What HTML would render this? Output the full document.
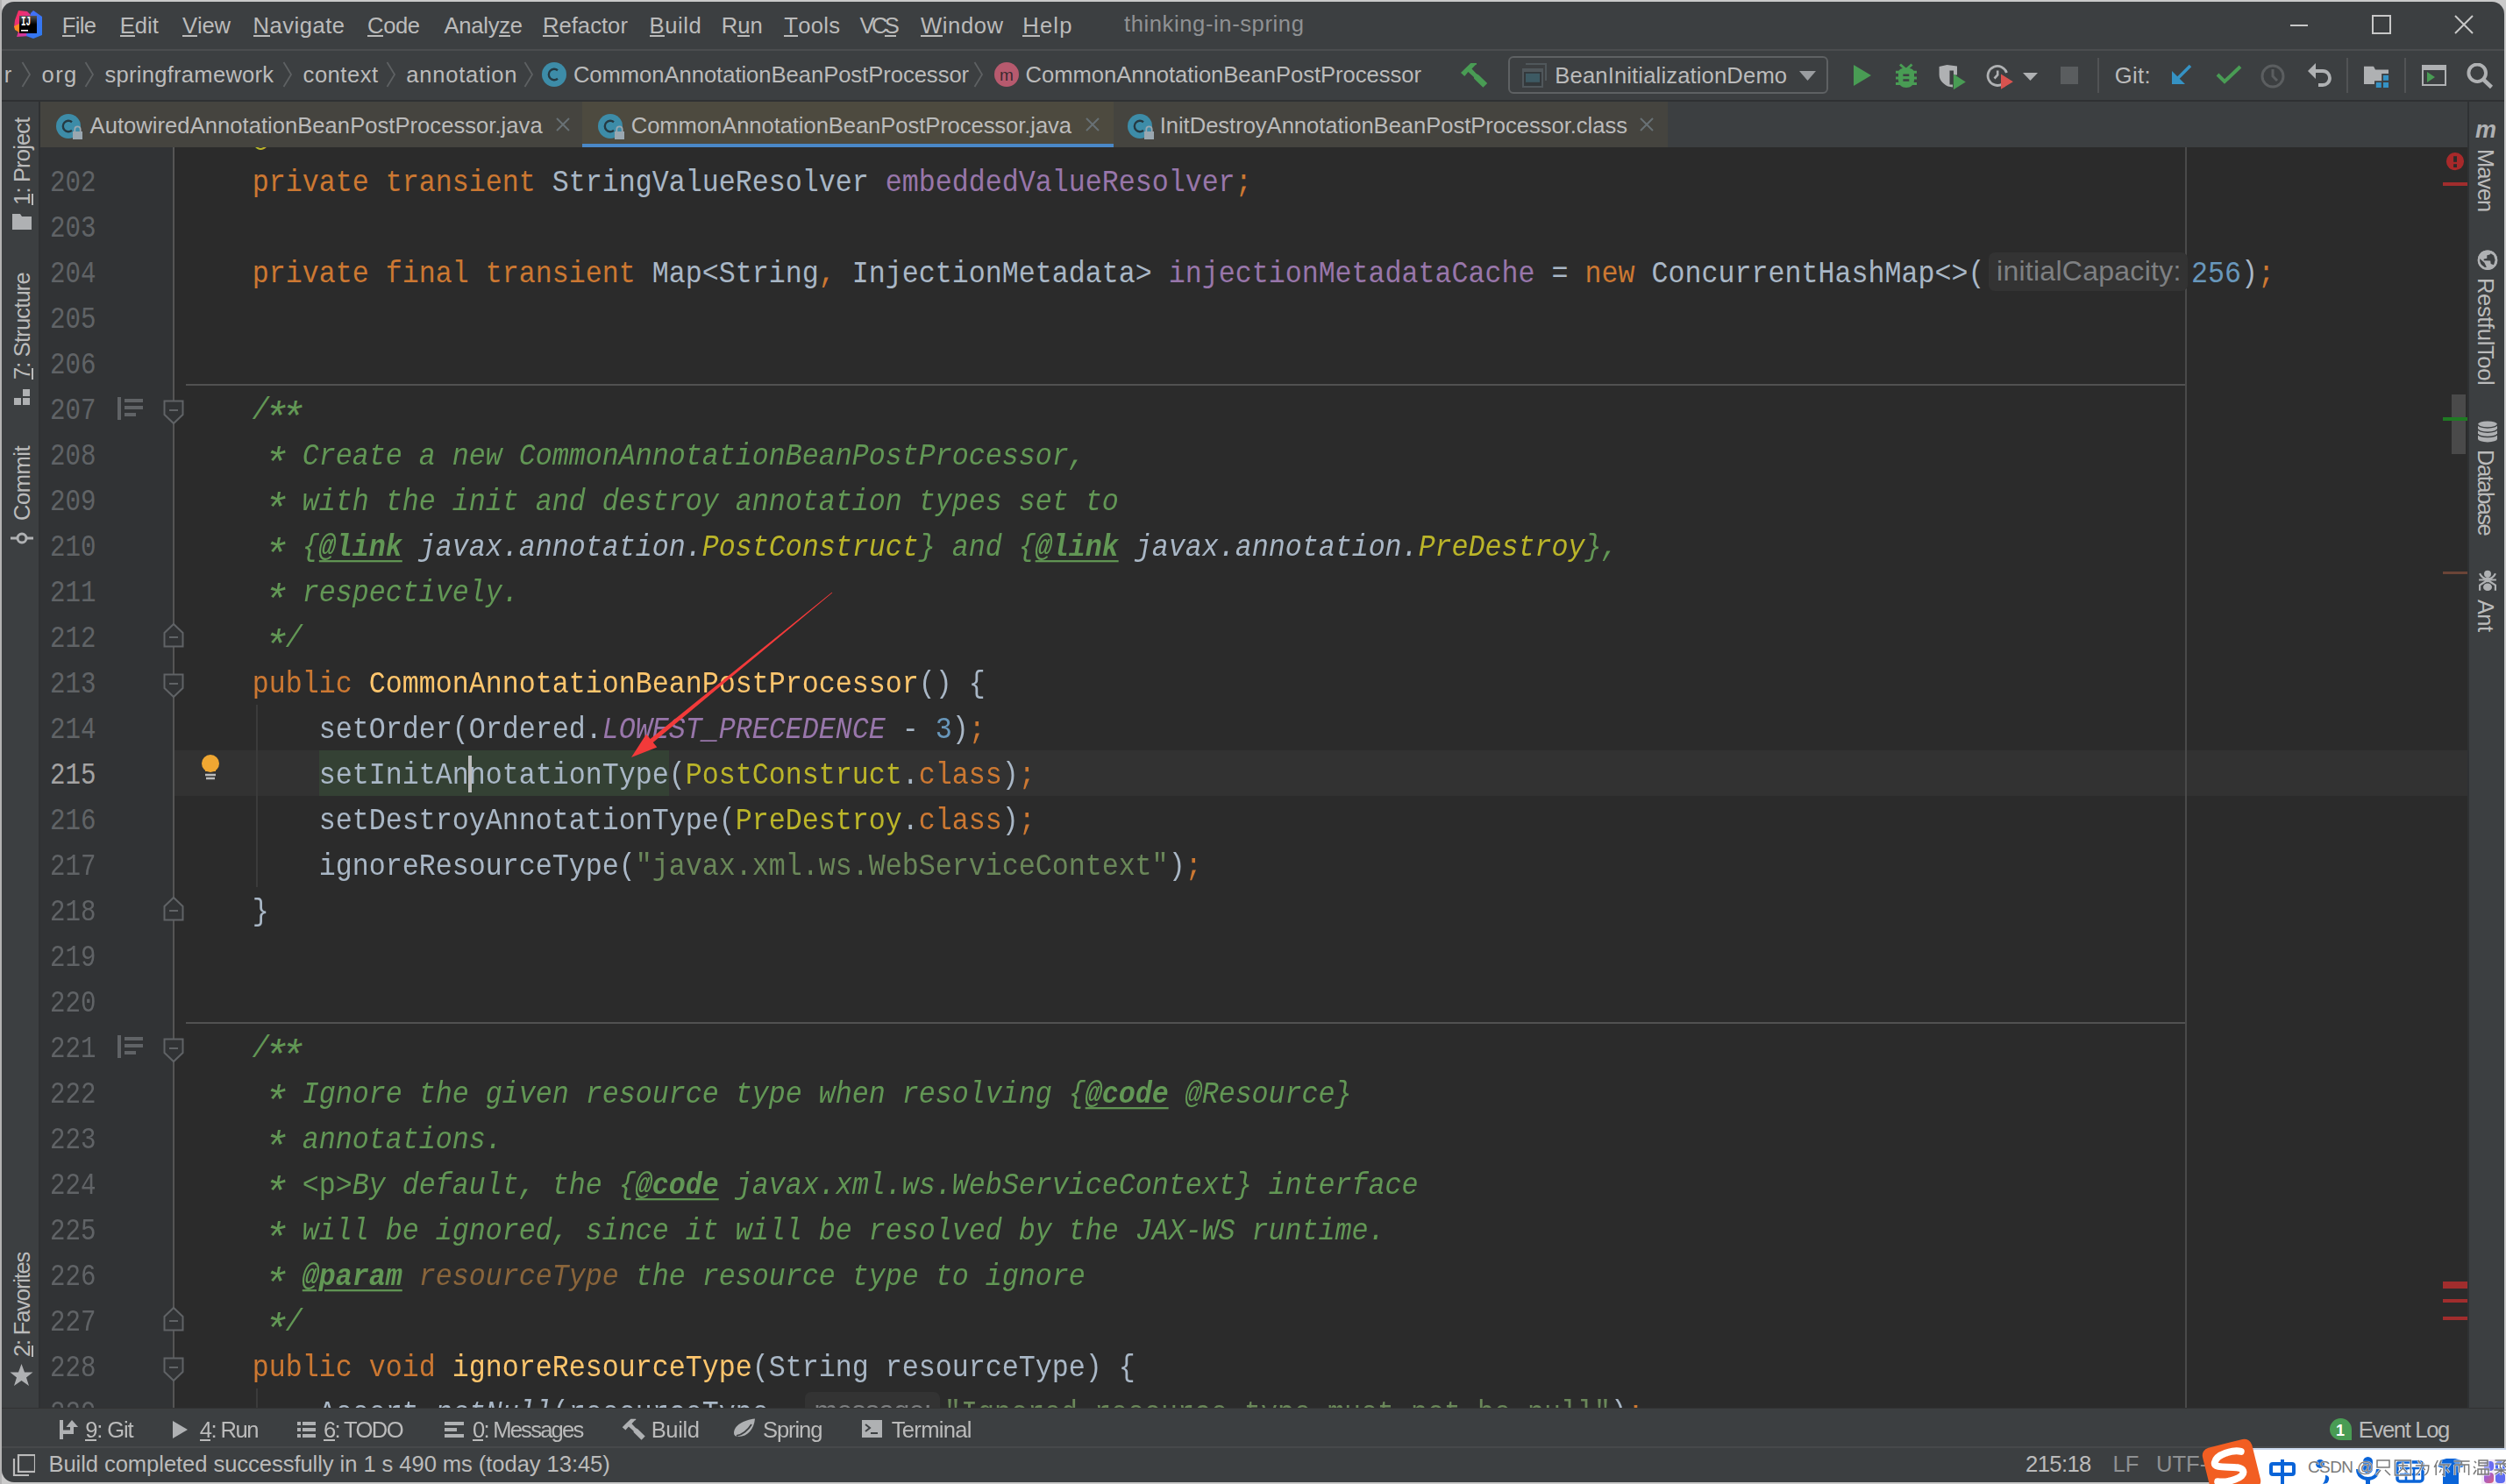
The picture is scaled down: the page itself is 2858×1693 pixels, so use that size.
<!DOCTYPE html><html><head><meta charset="utf-8"><style>
html,body{margin:0;padding:0;width:2858px;height:1693px;overflow:hidden;background:linear-gradient(90deg,#b4b4b4 0px,#b4b4b4 2px,#cacaca 2px);}
.r{position:absolute;}
.t{position:absolute;white-space:pre;line-height:1;font-family:"Liberation Sans", sans-serif;}
.t u{text-decoration:none;border-bottom:2px solid currentColor;display:inline-block;line-height:0.86;}
#win{position:absolute;left:0;top:0;width:2858px;height:1693px;clip-path:inset(2px round 14px);background:#3C3F41;}
.code{position:absolute;white-space:pre;font-family:"Liberation Mono", monospace;font-size:31.66px;line-height:52px;height:52px;color:#A9B7C6;transform-origin:0 38px;transform:scaleY(1.1);}
.kw{color:#CC7832}.md{color:#FFC66D}.fd{color:#9876AA}.num{color:#6897BB}.str{color:#6A8759}
.doc{color:#629755;font-style:italic}.ref{color:#BBB529}.dl{color:#A9B7C6}.tag{font-weight:bold;text-decoration:underline;text-underline-offset:5px;text-decoration-thickness:2px;}
.it{font-style:italic}.ast{display:inline-block;transform:translate(-2.2px,10.3px) scale(1.5,1.36);}.pn{color:#8A653B}
.ln{position:absolute;white-space:pre;font-family:"Liberation Mono", monospace;font-size:31.66px;line-height:52px;color:#606366;text-align:right;width:63.5px;left:0px;transform-origin:63.5px 38px;transform:scale(0.92,1.08);}
</style></head><body><div id="win"><svg class="r" style="left:14px;top:11px;" width="36" height="36" viewBox="0 0 36 36">
<defs><linearGradient id="lg1" x1="0" y1="0" x2="1" y2="1"><stop offset="0" stop-color="#FF2D55"/><stop offset="1" stop-color="#C13CB8"/></linearGradient>
<linearGradient id="lg2" x1="0" y1="0" x2="1" y2="1"><stop offset="0" stop-color="#4A6CF7"/><stop offset="1" stop-color="#2D7BF0"/></linearGradient>
<linearGradient id="lg3" x1="0" y1="0" x2="0" y2="1"><stop offset="0" stop-color="#555"/><stop offset="0.5" stop-color="#000"/></linearGradient></defs>
<polygon points="7,1 17,2 22,7 20,30 5,31 8,22 2,20 3,12" fill="url(#lg1)"/>
<polygon points="2,19 8,16 8,26 3,23" fill="#FF8A1F"/>
<polygon points="24,1 34,8 34,29 24,33 16,30 21,4" fill="url(#lg2)"/>
<rect x="8" y="7" width="20" height="20" fill="url(#lg3)"/>
<text x="9.9" y="17.9" font-family="Liberation Mono" font-weight="bold" font-size="13.8" textLength="11.3" lengthAdjust="spacingAndGlyphs" fill="#fff">IJ</text>
<rect x="10" y="23" width="8" height="1.6" fill="#fff"/>
</svg><div class="t" style="left:70.80px;top:16.62px;font-size:25.6px;color:#BBBBBB;letter-spacing:-0.667px;"><u>F</u>ile</div><div class="t" style="left:136.70px;top:16.62px;font-size:25.6px;color:#BBBBBB;letter-spacing:0.033px;"><u>E</u>dit</div><div class="t" style="left:208.10px;top:16.62px;font-size:25.6px;color:#BBBBBB;letter-spacing:-0.200px;"><u>V</u>iew</div><div class="t" style="left:288.60px;top:16.62px;font-size:25.6px;color:#BBBBBB;letter-spacing:0.486px;"><u>N</u>avigate</div><div class="t" style="left:419.10px;top:16.62px;font-size:25.6px;color:#BBBBBB;letter-spacing:-0.400px;"><u>C</u>ode</div><div class="t" style="left:506.40px;top:16.62px;font-size:25.6px;color:#BBBBBB;letter-spacing:-0.233px;">Analy<u>z</u>e</div><div class="t" style="left:618.90px;top:16.62px;font-size:25.6px;color:#BBBBBB;letter-spacing:0.043px;"><u>R</u>efactor</div><div class="t" style="left:740.50px;top:16.62px;font-size:25.6px;color:#BBBBBB;letter-spacing:0.550px;"><u>B</u>uild</div><div class="t" style="left:822.70px;top:16.62px;font-size:25.6px;color:#BBBBBB;letter-spacing:0.000px;">R<u>u</u>n</div><div class="t" style="left:894.20px;top:16.62px;font-size:25.6px;color:#BBBBBB;letter-spacing:0.325px;"><u>T</u>ools</div><div class="t" style="left:980.50px;top:16.62px;font-size:25.6px;color:#BBBBBB;letter-spacing:-3.650px;">VC<u>S</u></div><div class="t" style="left:1050.00px;top:16.62px;font-size:25.6px;color:#BBBBBB;letter-spacing:0.600px;"><u>W</u>indow</div><div class="t" style="left:1166.20px;top:16.62px;font-size:25.6px;color:#BBBBBB;letter-spacing:1.233px;"><u>H</u>elp</div><div class="t" style="left:1282.00px;top:14.92px;font-size:25.6px;color:#8F9193;letter-spacing:0.588px;">thinking-in-spring</div><div class="r" style="left:2612px;top:28px;width:20px;height:2px;background:#C8C8C8;"></div><svg class="r" style="left:2705px;top:17px;" width="22" height="22" viewBox="0 0 22 22"><rect x="1" y="1" width="20" height="20" fill="none" stroke="#C8C8C8" stroke-width="2"/></svg><svg class="r" style="left:2799px;top:17px;" width="22" height="22" viewBox="0 0 22 22"><path d="M1 1L21 21M21 1L1 21" stroke="#C8C8C8" stroke-width="2"/></svg><div class="r" style="left:2px;top:56px;width:2854px;height:2px;background:#4B4D4F;"></div><div class="r" style="left:2px;top:114px;width:2854px;height:2px;background:#2F3133;"></div><div class="t" style="left:-15.50px;top:73.32px;font-size:25.6px;color:#BBBBBB;letter-spacing:6.000px;">ar</div><svg class="r" style="left:23.5px;top:70px;" width="12" height="30" viewBox="0 0 12 30"><path d="M1.5 1L10 15L1.5 29" fill="none" stroke="#5E6163" stroke-width="1.8"/></svg><svg class="r" style="left:96px;top:70px;" width="12" height="30" viewBox="0 0 12 30"><path d="M1.5 1L10 15L1.5 29" fill="none" stroke="#5E6163" stroke-width="1.8"/></svg><svg class="r" style="left:321.5px;top:70px;" width="12" height="30" viewBox="0 0 12 30"><path d="M1.5 1L10 15L1.5 29" fill="none" stroke="#5E6163" stroke-width="1.8"/></svg><svg class="r" style="left:439.5px;top:70px;" width="12" height="30" viewBox="0 0 12 30"><path d="M1.5 1L10 15L1.5 29" fill="none" stroke="#5E6163" stroke-width="1.8"/></svg><svg class="r" style="left:597px;top:70px;" width="12" height="30" viewBox="0 0 12 30"><path d="M1.5 1L10 15L1.5 29" fill="none" stroke="#5E6163" stroke-width="1.8"/></svg><svg class="r" style="left:1110px;top:70px;" width="12" height="30" viewBox="0 0 12 30"><path d="M1.5 1L10 15L1.5 29" fill="none" stroke="#5E6163" stroke-width="1.8"/></svg><div class="t" style="left:47.50px;top:73.32px;font-size:25.6px;color:#BBBBBB;letter-spacing:1.400px;">org</div><div class="t" style="left:119.50px;top:73.32px;font-size:25.6px;color:#BBBBBB;letter-spacing:0.250px;">springframework</div><div class="t" style="left:345.60px;top:73.32px;font-size:25.6px;color:#BBBBBB;letter-spacing:0.500px;">context</div><div class="t" style="left:463.30px;top:73.32px;font-size:25.6px;color:#BBBBBB;letter-spacing:0.744px;">annotation</div><svg class="r" style="left:618px;top:71px;" width="28" height="34" viewBox="0 0 28 34"><circle cx="14" cy="14" r="14" fill="#3D8CA8"/><path d="M18.0 9.25 A6.2 6.2 0 1 0 18.0 18.75" fill="none" stroke="#253942" stroke-width="2.4"/></svg><div class="t" style="left:653.90px;top:73.32px;font-size:25.6px;color:#BBBBBB;letter-spacing:-0.037px;">CommonAnnotationBeanPostProcessor</div><svg class="r" style="left:1134px;top:71px;" width="28" height="34" viewBox="0 0 28 34"><circle cx="14" cy="14" r="14" fill="#B75A6E"/><text x="14" y="20.5" text-anchor="middle" font-family="Liberation Sans" font-size="19" fill="#3C2A30">m</text></svg><div class="t" style="left:1169.60px;top:73.32px;font-size:25.6px;color:#BBBBBB;letter-spacing:-0.031px;">CommonAnnotationBeanPostProcessor</div><svg class="r" style="left:1664px;top:70px;" width="34" height="32" viewBox="0 0 34 32"><path d="M13.3 2.1L20 2.1L20 3.5L18.5 4.2L14.5 8.5L19.7 14L22.4 15.5L32.2 25L27.4 29.8L17.1 19.8L16.9 18.1L10.4 12.1L6.3 16.9L2 13.1L6.6 8.5Z" fill="#499C54"/></svg><div class="r" style="left:1720px;top:64px;width:361px;height:39px;border:2px solid #5E6163;border-radius:6px;"></div><svg class="r" style="left:1734px;top:70px;" width="32" height="30" viewBox="0 0 32 30"><path d="M6 2H30V22H28V4H6Z" fill="#50575B"/><path d="M2 8H26V30H2Z" fill="#50575B"/><rect x="4" y="12" width="20" height="16" fill="#33383B"/><rect x="6" y="13.8" width="16" height="10" fill="#3D5A63"/></svg><div class="t" style="left:1773.30px;top:74.32px;font-size:25.6px;color:#BBBBBB;letter-spacing:0.143px;">BeanInitializationDemo</div><svg class="r" style="left:2052px;top:81px;" width="20" height="12" viewBox="0 0 20 12"><path d="M0 0H19L9.5 11Z" fill="#9A9DA0"/></svg><svg class="r" style="left:2113px;top:73px;" width="22" height="26" viewBox="0 0 22 26"><path d="M1 1L21 13L1 25Z" fill="#499C54"/></svg><svg class="r" style="left:2160px;top:70px;" width="28" height="32" viewBox="0 0 28 32"><path d="M7 3.5L13.8 9.5L20.5 3.5" fill="none" stroke="#499C54" stroke-width="3"/><path d="M5 13C5 9 9 7.5 14 7.5S23 9 23 13V21C23 27 19 30 14 30S5 27 5 21Z" fill="#499C54"/><path d="M2 12.2H26M2 19H26M2 25.5H26" stroke="#499C54" stroke-width="3"/><path d="M10.4 15.7H17.3M10.4 21.5H17.3" stroke="#3C3F41" stroke-width="2.6"/></svg><svg class="r" style="left:2210px;top:72px;" width="34" height="32" viewBox="0 0 34 32"><path d="M1.6 4L10.5 2L22 3.5V13.5H18V8.5H13.5V24.5H17V27.5L11.5 26.5C5 23 1.6 19 1.6 13Z" fill="#AFB1B3"/><path d="M17.9 12.5L31.8 21.5L17.9 30.2Z" fill="#499C54"/></svg><svg class="r" style="left:2264px;top:72px;" width="34" height="32" viewBox="0 0 34 32"><path d="M19.5 24A11 11 0 1 1 24.5 11" fill="none" stroke="#AFB1B3" stroke-width="2.8"/><path d="M14.2 8.5V13.5L10.5 17.5" fill="none" stroke="#AFB1B3" stroke-width="2.6"/><path d="M18 12.5L31.9 21.3L18 29.8Z" fill="#D9534F"/></svg><svg class="r" style="left:2307px;top:83px;" width="18" height="10" viewBox="0 0 18 10"><path d="M0 0H17L8.5 9Z" fill="#AFB1B3"/></svg><div class="r" style="left:2350px;top:76px;width:20px;height:20px;background:#5A5D5F;"></div><div class="r" style="left:2392px;top:66px;width:2px;height:40px;background:#515355;"></div><div class="t" style="left:2411.70px;top:74.32px;font-size:25.6px;color:#BBBBBB;letter-spacing:0.333px;">Git:</div><svg class="r" style="left:2476px;top:73px;" width="25" height="25" viewBox="0 0 25 25"><path d="M22 2L5 19" stroke="#3592C4" stroke-width="3.5"/><path d="M1 8V23H16Z" fill="#3592C4"/></svg><svg class="r" style="left:2527px;top:74px;" width="30" height="22" viewBox="0 0 30 22"><path d="M2 11L10 19L28 2" fill="none" stroke="#499C54" stroke-width="4"/></svg><svg class="r" style="left:2577px;top:72px;" width="30" height="30" viewBox="0 0 30 30"><circle cx="15" cy="15" r="12" fill="none" stroke="#5B5E60" stroke-width="3"/><path d="M15 7V15L20 20" fill="none" stroke="#5B5E60" stroke-width="3"/></svg><svg class="r" style="left:2631px;top:71px;" width="30" height="28" viewBox="0 0 30 28"><path d="M6 10H18C23 10 26 14 26 18C26 23 22 26 18 26H13" fill="none" stroke="#AFB1B3" stroke-width="3.8"/><path d="M1 10L10 1V19Z" fill="#AFB1B3"/></svg><div class="r" style="left:2676px;top:66px;width:2px;height:40px;background:#515355;"></div><svg class="r" style="left:2695px;top:74px;" width="30" height="28" viewBox="0 0 30 28"><path d="M1 1.8H12L14 5.4H29V10H21.2V18.2H13V22.1H1Z" fill="#AFB1B3"/><rect x="23" y="11.8" width="6" height="6" fill="#3592C4"/><rect x="14.8" y="20" width="6" height="6" fill="#3592C4"/><rect x="23" y="20" width="6" height="6" fill="#3592C4"/></svg><div class="r" style="left:2742px;top:66px;width:2px;height:40px;background:#515355;"></div><svg class="r" style="left:2761px;top:73px;" width="30" height="26" viewBox="0 0 30 26"><rect x="1" y="1" width="28" height="24" fill="#AFB1B3"/><rect x="3" y="7" width="24" height="16" fill="#3C3F41"/><path d="M7 9L16 15L7 21Z" fill="#499C54"/></svg><svg class="r" style="left:2813px;top:72px;" width="32" height="32" viewBox="0 0 32 32"><circle cx="12.2" cy="11.3" r="9.8" fill="none" stroke="#AFB1B3" stroke-width="3.9"/><path d="M19.5 19L28.5 27.5" stroke="#AFB1B3" stroke-width="4.5"/></svg><div class="r" style="left:46px;top:116px;width:618px;height:52px;background:#45443F;"></div><div class="r" style="left:664px;top:116px;width:606px;height:52px;background:#4D4A3F;"></div><div class="r" style="left:1270px;top:116px;width:632px;height:52px;background:#45443F;"></div><div class="r" style="left:664px;top:164px;width:606px;height:6px;background:#4A88C7;"></div><div class="r" style="left:46px;top:168px;width:618px;height:2px;background:#2E2E2E;"></div><div class="r" style="left:1270px;top:168px;width:1544px;height:2px;background:#2E2E2E;"></div><svg class="r" style="left:64.3px;top:129.5px;" width="34" height="34" viewBox="0 0 34 34"><circle cx="14" cy="14" r="14" fill="#3D8CA8"/><path d="M18.0 9.25 A6.2 6.2 0 1 0 18.0 18.75" fill="none" stroke="#253942" stroke-width="2.4"/><rect x="19" y="20" width="11" height="9" fill="#9AA7B0"/><path d="M21.3 20.5v-3a3.2 3.2 0 0 1 6.4 0v3" fill="none" stroke="#9AA7B0" stroke-width="1.8"/></svg><div class="t" style="left:102.60px;top:130.82px;font-size:25.6px;color:#BBBBBB;letter-spacing:0.025px;">AutowiredAnnotationBeanPostProcessor.java</div><svg class="r" style="left:634px;top:134px;" width="16" height="16" viewBox="0 0 16 16"><path d="M1 1L15 15M15 1L1 15" stroke="#687175" stroke-width="2"/></svg><svg class="r" style="left:681.8px;top:129.5px;" width="34" height="34" viewBox="0 0 34 34"><circle cx="14" cy="14" r="14" fill="#3D8CA8"/><path d="M18.0 9.25 A6.2 6.2 0 1 0 18.0 18.75" fill="none" stroke="#253942" stroke-width="2.4"/><rect x="19" y="20" width="11" height="9" fill="#9AA7B0"/><path d="M21.3 20.5v-3a3.2 3.2 0 0 1 6.4 0v3" fill="none" stroke="#9AA7B0" stroke-width="1.8"/></svg><div class="t" style="left:719.80px;top:130.82px;font-size:25.6px;color:#BBBBBB;letter-spacing:-0.076px;">CommonAnnotationBeanPostProcessor.java</div><svg class="r" style="left:1238px;top:134px;" width="16" height="16" viewBox="0 0 16 16"><path d="M1 1L15 15M15 1L1 15" stroke="#687175" stroke-width="2"/></svg><svg class="r" style="left:1285.6px;top:129.5px;" width="34" height="34" viewBox="0 0 34 34"><circle cx="14" cy="14" r="14" fill="#3D8CA8"/><path d="M18.0 9.25 A6.2 6.2 0 1 0 18.0 18.75" fill="none" stroke="#253942" stroke-width="2.4"/><rect x="19" y="20" width="11" height="9" fill="#9AA7B0"/><path d="M21.3 20.5v-3a3.2 3.2 0 0 1 6.4 0v3" fill="none" stroke="#9AA7B0" stroke-width="1.8"/></svg><div class="t" style="left:1322.70px;top:130.82px;font-size:25.6px;color:#BBBBBB;letter-spacing:-0.037px;">InitDestroyAnnotationBeanPostProcessor.class</div><svg class="r" style="left:1870px;top:134px;" width="16" height="16" viewBox="0 0 16 16"><path d="M1 1L15 15M15 1L1 15" stroke="#687175" stroke-width="2"/></svg><div class="r" style="left:44px;top:116px;width:2px;height:1490px;background:#2F3133;"></div><div class="t" style="left:13.32px;top:233.60px;transform-origin:0 0;transform:rotate(-90deg);font-size:25.6px;color:#BBBBBB;letter-spacing:-0.856px;"><u>1</u>: Project</div><svg class="r" style="left:14px;top:244px;" width="22" height="18" viewBox="0 0 22 18"><path d="M0 0H9L11 3H22V18H0Z" fill="#AFB1B3"/></svg><div class="t" style="left:13.32px;top:432.90px;transform-origin:0 0;transform:rotate(-90deg);font-size:25.6px;color:#BBBBBB;letter-spacing:-0.873px;"><u>7</u>: Structure</div><svg class="r" style="left:16px;top:444px;" width="18" height="18" viewBox="0 0 18 18"><rect x="10" y="0" width="8" height="8" fill="#AFB1B3"/><rect x="0" y="10" width="8" height="8" fill="#AFB1B3"/><rect x="10" y="10" width="8" height="8" fill="#AFB1B3"/></svg><div class="t" style="left:12.82px;top:594.10px;transform-origin:0 0;transform:rotate(-90deg);font-size:25.6px;color:#BBBBBB;letter-spacing:-0.500px;">Commit</div><svg class="r" style="left:12px;top:606px;" width="26" height="16" viewBox="0 0 26 16"><circle cx="13" cy="8" r="5" fill="none" stroke="#AFB1B3" stroke-width="3"/><path d="M0 8H8M18 8H26" stroke="#AFB1B3" stroke-width="3"/></svg><div class="t" style="left:13.32px;top:1547.70px;transform-origin:0 0;transform:rotate(-90deg);font-size:25.6px;color:#BBBBBB;letter-spacing:-1.209px;"><u>2</u>: Favorites</div><svg class="r" style="left:11px;top:1555px;" width="27" height="27" viewBox="0 0 27 27"><path d="M13.5 1L17 10.5H26.5L19 16.5L22 26L13.5 20L5 26L8 16.5L0.5 10.5H10Z" fill="#AFB1B3"/></svg><div class="r" style="left:2814px;top:116px;width:2px;height:1490px;background:#2F3133;"></div><svg class="r" style="left:2823px;top:139px;" width="28" height="19" viewBox="0 0 28 19"><text x="0" y="18" font-family="Liberation Sans" font-weight="bold" font-style="italic" font-size="27" fill="#AFB1B3">m</text></svg><div class="t" style="left:2847.18px;top:169.60px;transform-origin:0 0;transform:rotate(90deg);font-size:25.6px;color:#BBBBBB;letter-spacing:-1.150px;">Maven</div><svg class="r" style="left:2825px;top:285px;" width="24" height="24" viewBox="0 0 24 24"><circle cx="12" cy="11.7" r="11.2" fill="#AFB1B3"/><path d="M15.7 4.2L19.1 6.6L20.6 11.4L19.1 17.3L15.7 16L15.2 12.4L7.7 12.2L7.7 10.5L11.3 9.7L11.3 6.3L14.3 5.6Z" fill="#3C3F41"/><path d="M3.1 10L8.4 14.8L10.9 19.7L8.9 19.9L4.6 16.8L3.1 13.6Z" fill="#3C3F41"/><circle cx="12" cy="11.7" r="10.2" fill="none" stroke="#AFB1B3" stroke-width="2.2"/></svg><div class="t" style="left:2847.18px;top:316.60px;transform-origin:0 0;transform:rotate(90deg);font-size:25.6px;color:#BBBBBB;letter-spacing:-0.390px;">RestfulTool</div><svg class="r" style="left:2825px;top:480px;" width="24" height="26" viewBox="0 0 24 26"><path d="M1 4V20.8A11 3.6 0 0 0 23 20.8V4Z" fill="#AFB1B3"/><ellipse cx="12" cy="4" rx="11" ry="3.6" fill="#AFB1B3"/><path d="M1 4.3 A11 3.6 0 0 0 23 4.3" fill="none" stroke="#3C3F41" stroke-width="1.5"/><path d="M1 9.6 A11 3.6 0 0 0 23 9.6" fill="none" stroke="#3C3F41" stroke-width="1.5"/><path d="M1 15.0 A11 3.6 0 0 0 23 15.0" fill="none" stroke="#3C3F41" stroke-width="1.5"/></svg><div class="t" style="left:2847.18px;top:513.00px;transform-origin:0 0;transform:rotate(90deg);font-size:25.6px;color:#BBBBBB;letter-spacing:-1.543px;">Database</div><svg class="r" style="left:2824px;top:650px;" width="26" height="26" viewBox="0 0 26 26"><circle cx="13" cy="4.8" r="4" fill="#AFB1B3"/><ellipse cx="13" cy="11.3" rx="3" ry="3" fill="#AFB1B3"/><ellipse cx="13" cy="19.8" rx="5" ry="4.3" fill="#AFB1B3"/><path d="M4 4.3Q7 10 12 10.5M22 4.3Q19 10 14 10.5M3.1 11.5H22.9M12 12.5L4.1 17.6V23.8M14 12.5L21.9 17.6V23.8" fill="none" stroke="#AFB1B3" stroke-width="2.2"/></svg><div class="t" style="left:2847.18px;top:684.40px;transform-origin:0 0;transform:rotate(90deg);font-size:25.6px;color:#BBBBBB;letter-spacing:-0.700px;">Ant</div><div class="r" style="left:46px;top:168px;width:151px;height:1438px;background:#313335;"></div><div class="r" style="left:199px;top:168px;width:2615px;height:1438px;background:#2B2B2B;"></div><div class="r" style="left:46px;top:168px;width:2768px;height:1438px;overflow:hidden;"><div class="r" style="left:153px;top:688px;width:2615px;height:52px;background:#323232;"></div><div class="r" style="left:317.8px;top:688px;width:398.90000000000003px;height:52px;background:#344134;"></div><div class="r" style="left:166px;top:270px;width:2280px;height:2px;background:#515151;"></div><div class="r" style="left:166px;top:998px;width:2280px;height:2px;background:#515151;"></div><div class="r" style="left:2446px;top:0px;width:2px;height:1438px;background:#4A4A4A;"></div><div class="r" style="left:151px;top:0px;width:2px;height:1438px;background:#555555;"></div><div class="r" style="left:246px;top:636px;width:2px;height:208px;background:#3B3B3B;"></div><div class="r" style="left:246px;top:1416px;width:2px;height:22px;background:#3B3B3B;"></div><div class="r" style="left:2222px;top:120px;width:227px;height:44px;background:#333333;border-radius:7px;"></div><div class="r" style="left:872px;top:1420px;width:154px;height:44px;background:#333333;border-radius:7px;"></div><div class="code" style="left:165.80px;top:-36.40px;">    <span class="ref">@Nullable</span></div><div class="code" style="left:165.80px;top:15.60px;">    <span class="kw">private transient </span>StringValueResolver <span class="fd">embeddedValueResolver</span><span class="kw">;</span></div><div class="code" style="left:165.80px;top:119.60px;">    <span class="kw">private final transient </span>Map&lt;String<span class="kw">, </span>InjectionMetadata&gt; <span class="fd">injectionMetadataCache</span> = <span class="kw">new </span>ConcurrentHashMap&lt;&gt;(</div><div class="code" style="left:165.80px;top:275.60px;">    <span class="doc">/<span class="ast">*</span><span class="ast">*</span></span></div><div class="code" style="left:165.80px;top:327.60px;">    <span class="doc"> <span class="ast">*</span> Create a new CommonAnnotationBeanPostProcessor,</span></div><div class="code" style="left:165.80px;top:379.60px;">    <span class="doc"> <span class="ast">*</span> with the init and destroy annotation types set to</span></div><div class="code" style="left:165.80px;top:431.60px;">    <span class="doc"> <span class="ast">*</span> {</span><span class="doc tag">@link</span><span class="doc"> </span><span class="dl it">javax.annotation.</span><span class="ref it">PostConstruct</span><span class="doc">} and {</span><span class="doc tag">@link</span><span class="doc"> </span><span class="dl it">javax.annotation.</span><span class="ref it">PreDestroy</span><span class="doc">},</span></div><div class="code" style="left:165.80px;top:483.60px;">    <span class="doc"> <span class="ast">*</span> respectively.</span></div><div class="code" style="left:165.80px;top:535.60px;">    <span class="doc"> <span class="ast">*</span>/</span></div><div class="code" style="left:165.80px;top:587.60px;">    <span class="kw">public </span><span class="md">CommonAnnotationBeanPostProcessor</span>() {</div><div class="code" style="left:165.80px;top:639.60px;">        setOrder(Ordered.<span class="fd it">LOWEST_PRECEDENCE</span> - <span class="num">3</span>)<span class="kw">;</span></div><div class="code" style="left:165.80px;top:691.60px;">        setInitAnnotationType(<span class="ref">PostConstruct</span>.<span class="kw">class</span>)<span class="kw">;</span></div><div class="code" style="left:165.80px;top:743.60px;">        setDestroyAnnotationType(<span class="ref">PreDestroy</span>.<span class="kw">class</span>)<span class="kw">;</span></div><div class="code" style="left:165.80px;top:795.60px;">        ignoreResourceType(<span class="str">&quot;javax.xml.ws.WebServiceContext&quot;</span>)<span class="kw">;</span></div><div class="code" style="left:165.80px;top:847.60px;">    }</div><div class="code" style="left:165.80px;top:1003.60px;">    <span class="doc">/<span class="ast">*</span><span class="ast">*</span></span></div><div class="code" style="left:165.80px;top:1055.60px;">    <span class="doc"> <span class="ast">*</span> Ignore the given resource type when resolving {</span><span class="doc tag">@code</span><span class="doc"> @Resource}</span></div><div class="code" style="left:165.80px;top:1107.60px;">    <span class="doc"> <span class="ast">*</span> annotations.</span></div><div class="code" style="left:165.80px;top:1159.60px;">    <span class="doc"> <span class="ast">*</span> </span><span class="doc" style="font-style:normal">&lt;p&gt;</span><span class="doc">By default, the {</span><span class="doc tag">@code</span><span class="doc"> javax.xml.ws.WebServiceContext} interface</span></div><div class="code" style="left:165.80px;top:1211.60px;">    <span class="doc"> <span class="ast">*</span> will be ignored, since it will be resolved by the JAX-WS runtime.</span></div><div class="code" style="left:165.80px;top:1263.60px;">    <span class="doc"> <span class="ast">*</span> </span><span class="doc tag">@param</span><span class="doc"> </span><span class="pn it">resourceType</span><span class="doc"> the resource type to ignore</span></div><div class="code" style="left:165.80px;top:1315.60px;">    <span class="doc"> <span class="ast">*</span>/</span></div><div class="code" style="left:165.80px;top:1367.60px;">    <span class="kw">public void </span><span class="md">ignoreResourceType</span>(String resourceType) {</div><div class="code" style="left:165.80px;top:1419.60px;">        Assert.<span class="it">notNull</span>(resourceType<span class="kw">,</span> </div><div class="code" style="left:2453.00px;top:119.60px;"><span class="num">256</span>)<span class="kw">;</span></div><div class="code" style="left:1031.00px;top:1419.60px;"><span class="str">&quot;Ignored resource type must not be null&quot;</span>)<span class="kw">;</span></div><div class="t" style="left:2231.00px;top:124.91px;font-size:32px;color:#7E8082;letter-spacing:0.267px;">initialCapacity:</div><div class="t" style="left:882.40px;top:1424.91px;font-size:32px;color:#7E8082;letter-spacing:-0.629px;">message:</div><div class="ln" style="top:-36.40px;color:#606366">201</div><div class="ln" style="top:15.60px;color:#606366">202</div><div class="ln" style="top:67.60px;color:#606366">203</div><div class="ln" style="top:119.60px;color:#606366">204</div><div class="ln" style="top:171.60px;color:#606366">205</div><div class="ln" style="top:223.60px;color:#606366">206</div><div class="ln" style="top:275.60px;color:#606366">207</div><div class="ln" style="top:327.60px;color:#606366">208</div><div class="ln" style="top:379.60px;color:#606366">209</div><div class="ln" style="top:431.60px;color:#606366">210</div><div class="ln" style="top:483.60px;color:#606366">211</div><div class="ln" style="top:535.60px;color:#606366">212</div><div class="ln" style="top:587.60px;color:#606366">213</div><div class="ln" style="top:639.60px;color:#606366">214</div><div class="ln" style="top:691.60px;color:#A4A3A3">215</div><div class="ln" style="top:743.60px;color:#606366">216</div><div class="ln" style="top:795.60px;color:#606366">217</div><div class="ln" style="top:847.60px;color:#606366">218</div><div class="ln" style="top:899.60px;color:#606366">219</div><div class="ln" style="top:951.60px;color:#606366">220</div><div class="ln" style="top:1003.60px;color:#606366">221</div><div class="ln" style="top:1055.60px;color:#606366">222</div><div class="ln" style="top:1107.60px;color:#606366">223</div><div class="ln" style="top:1159.60px;color:#606366">224</div><div class="ln" style="top:1211.60px;color:#606366">225</div><div class="ln" style="top:1263.60px;color:#606366">226</div><div class="ln" style="top:1315.60px;color:#606366">227</div><div class="ln" style="top:1367.60px;color:#606366">228</div><div class="ln" style="top:1419.60px;color:#606366">229</div><svg class="r" style="left:87px;top:285px;" width="31" height="26" viewBox="0 0 31 26"><rect x="1" y="0" width="4" height="26" fill="#606366"/><rect x="9" y="2" width="21" height="4" fill="#606366"/><rect x="9" y="10" width="21" height="4" fill="#606366"/><rect x="9" y="18" width="13" height="4" fill="#606366"/></svg><svg class="r" style="left:87px;top:1013px;" width="31" height="26" viewBox="0 0 31 26"><rect x="1" y="0" width="4" height="26" fill="#606366"/><rect x="9" y="2" width="21" height="4" fill="#606366"/><rect x="9" y="10" width="21" height="4" fill="#606366"/><rect x="9" y="18" width="13" height="4" fill="#606366"/></svg><svg class="r" style="left:140px;top:288px;" width="24" height="30" viewBox="0 0 24 30"><path d="M1.5 1.5H22.5V17L12 27L1.5 17Z" fill="#313335" stroke="#606366" stroke-width="2"/><path d="M7 12H17" stroke="#606366" stroke-width="2"/></svg><svg class="r" style="left:140px;top:600px;" width="24" height="30" viewBox="0 0 24 30"><path d="M1.5 1.5H22.5V17L12 27L1.5 17Z" fill="#313335" stroke="#606366" stroke-width="2"/><path d="M7 12H17" stroke="#606366" stroke-width="2"/></svg><svg class="r" style="left:140px;top:1016px;" width="24" height="30" viewBox="0 0 24 30"><path d="M1.5 1.5H22.5V17L12 27L1.5 17Z" fill="#313335" stroke="#606366" stroke-width="2"/><path d="M7 12H17" stroke="#606366" stroke-width="2"/></svg><svg class="r" style="left:140px;top:1380px;" width="24" height="30" viewBox="0 0 24 30"><path d="M1.5 1.5H22.5V17L12 27L1.5 17Z" fill="#313335" stroke="#606366" stroke-width="2"/><path d="M7 12H17" stroke="#606366" stroke-width="2"/></svg><svg class="r" style="left:140px;top:541px;" width="24" height="30" viewBox="0 0 24 30"><path d="M1.5 28.5H22.5V13L12 3L1.5 13Z" fill="#313335" stroke="#606366" stroke-width="2"/><path d="M7 18H17" stroke="#606366" stroke-width="2"/></svg><svg class="r" style="left:140px;top:853px;" width="24" height="30" viewBox="0 0 24 30"><path d="M1.5 28.5H22.5V13L12 3L1.5 13Z" fill="#313335" stroke="#606366" stroke-width="2"/><path d="M7 18H17" stroke="#606366" stroke-width="2"/></svg><svg class="r" style="left:140px;top:1321px;" width="24" height="30" viewBox="0 0 24 30"><path d="M1.5 28.5H22.5V13L12 3L1.5 13Z" fill="#313335" stroke="#606366" stroke-width="2"/><path d="M7 18H17" stroke="#606366" stroke-width="2"/></svg><svg class="r" style="left:182px;top:693px;" width="24" height="32" viewBox="0 0 24 32"><circle cx="12" cy="10" r="10" fill="#F0A732"/><path d="M6 14H18V19H6Z" fill="#F0A732"/><path d="M6 23H18M7 27H17" stroke="#BBBBBB" stroke-width="2.4"/></svg><div class="r" style="left:488px;top:694px;width:4px;height:42px;background:#BBBBBB;"></div><svg class="r" style="left:2743px;top:5px;" width="23" height="23" viewBox="0 0 23 23"><circle cx="11" cy="11.1" r="10.1" fill="#A8292A"/><rect x="9.1" y="5.2" width="3.9" height="6.6" fill="#2B2B2B"/><rect x="9.1" y="14.2" width="3.9" height="3.8" fill="#2B2B2B"/></svg><div class="r" style="left:2740px;top:40px;width:28px;height:4px;background:#A12D2D;"></div><div class="r" style="left:2750px;top:282px;width:16px;height:68px;background:#4A4A4A;"></div><div class="r" style="left:2740px;top:308px;width:28px;height:4px;background:#1F7A23;"></div><div class="r" style="left:2740px;top:484px;width:28px;height:3px;background:#6B4437;"></div><div class="r" style="left:2740px;top:1294px;width:28px;height:8px;background:#A12D2D;"></div><div class="r" style="left:2740px;top:1314px;width:28px;height:4px;background:#A12D2D;"></div><div class="r" style="left:2740px;top:1334px;width:28px;height:4px;background:#A12D2D;"></div><svg class="r" style="left:654px;top:492px;" width="270" height="220" viewBox="0 0 270 220"><path d="M249.3 16.2 L44.8 186.9 L49.3 192.4 L20 204 L37.1 177.6 L41.6 183.1 L248.7 15.8 Z" fill="#F23A3A"/></svg></div><div class="r" style="left:2px;top:1606px;width:2854px;height:1px;background:#323232;"></div><div class="r" style="left:2px;top:1650px;width:2854px;height:2px;background:#47494B;"></div><svg class="r" style="left:67px;top:1619px;" width="23" height="24" viewBox="0 0 23 24"><rect x="1" y="1" width="4" height="22" fill="#AFB1B3"/><rect x="5" y="12.5" width="12" height="4.5" fill="#AFB1B3"/><rect x="13" y="8" width="4" height="9" fill="#AFB1B3"/><path d="M15 1L8.5 9H22.1Z" fill="#AFB1B3"/></svg><div class="t" style="left:97.20px;top:1618.82px;font-size:25.6px;color:#BBBBBB;letter-spacing:-1.160px;"><u>9</u>: Git</div><svg class="r" style="left:196px;top:1620px;" width="19" height="22" viewBox="0 0 19 22"><path d="M1 1L18 11L1 21Z" fill="#AFB1B3"/></svg><div class="t" style="left:227.70px;top:1618.82px;font-size:25.6px;color:#BBBBBB;letter-spacing:-1.520px;"><u>4</u>: Run</div><svg class="r" style="left:339px;top:1621px;" width="22" height="20" viewBox="0 0 22 20"><rect x="0" y="1" width="4" height="4" fill="#AFB1B3"/><rect x="6" y="1" width="15" height="4" fill="#AFB1B3"/><rect x="0" y="8" width="4" height="4" fill="#AFB1B3"/><rect x="6" y="8" width="15" height="4" fill="#AFB1B3"/><rect x="0" y="15" width="4" height="4" fill="#AFB1B3"/><rect x="6" y="15" width="15" height="4" fill="#AFB1B3"/></svg><div class="t" style="left:369.00px;top:1618.82px;font-size:25.6px;color:#BBBBBB;letter-spacing:-1.650px;"><u>6</u>: TODO</div><svg class="r" style="left:507px;top:1621px;" width="24" height="20" viewBox="0 0 24 20"><rect x="0" y="1" width="22" height="4" fill="#AFB1B3"/><rect x="0" y="8" width="14" height="4" fill="#AFB1B3"/><rect x="0" y="15" width="22" height="4" fill="#AFB1B3"/></svg><div class="t" style="left:539.00px;top:1618.82px;font-size:25.6px;color:#BBBBBB;letter-spacing:-1.780px;"><u>0</u>: Messages</div><svg class="r" style="left:708px;top:1617px;" width="30" height="28" viewBox="0 0 30 28"><path transform="scale(0.86)" d="M13.3 2.1L20 2.1L20 3.5L18.5 4.2L14.5 8.5L19.7 14L22.4 15.5L32.2 25L27.4 29.8L17.1 19.8L16.9 18.1L10.4 12.1L6.3 16.9L2 13.1L6.6 8.5Z" fill="#AFB1B3"/></svg><div class="t" style="left:742.70px;top:1618.82px;font-size:25.6px;color:#BBBBBB;letter-spacing:-0.425px;">Build</div><svg class="r" style="left:836px;top:1618px;" width="26" height="22" viewBox="0 0 26 22"><path d="M25 0.5C24 12 17 21 6 21C3 21 1 19.5 1 17C1 8 12 2 25 0.5Z" fill="#AFB1B3"/><path d="M4 20C10 19 17 14 21 7" stroke="#3C3F41" stroke-width="1.8" fill="none"/></svg><div class="t" style="left:870.00px;top:1618.82px;font-size:25.6px;color:#BBBBBB;letter-spacing:-1.100px;">Spring</div><svg class="r" style="left:983px;top:1620px;" width="23" height="20" viewBox="0 0 23 20"><rect x="0" y="0" width="23" height="20" fill="#AFB1B3"/><path d="M4 5L9 9L4 13" fill="none" stroke="#3C3F41" stroke-width="2"/><path d="M10 15H18" stroke="#3C3F41" stroke-width="2"/></svg><div class="t" style="left:1016.70px;top:1618.82px;font-size:25.6px;color:#BBBBBB;letter-spacing:-0.700px;">Terminal</div><svg class="r" style="left:2656px;top:1617px;" width="27" height="28" viewBox="0 0 27 28"><path d="M13.5 1A12.5 12.5 0 1 0 13.5 26H26V13.5A12.5 12.5 0 0 0 13.5 1Z" fill="#499C54"/><text x="13" y="21" text-anchor="middle" font-family="Liberation Sans" font-weight="bold" font-size="18" fill="#fff">1</text></svg><div class="t" style="left:2689.80px;top:1618.82px;font-size:25.6px;color:#BBBBBB;letter-spacing:-1.350px;">Event Log</div><svg class="r" style="left:13px;top:1659px;" width="27" height="27" viewBox="0 0 27 27"><path d="M3 5V24H20" fill="none" stroke="#BBBBBB" stroke-width="2.2"/><rect x="8" y="1" width="19" height="19" fill="none" stroke="#BBBBBB" stroke-width="2.2"/></svg><div class="t" style="left:55.40px;top:1658.32px;font-size:25.6px;color:#BBBBBB;letter-spacing:-0.073px;">Build completed successfully in 1 s 490 ms (today 13:45)</div><div class="t" style="left:2310.00px;top:1658.32px;font-size:25.6px;color:#BBBBBB;letter-spacing:-0.600px;">215:18</div><div class="t" style="left:2409.50px;top:1658.32px;font-size:25.6px;color:#8F9193;letter-spacing:0.000px;">LF</div><div class="t" style="left:2459.00px;top:1658.32px;font-size:25.6px;color:#8F9193;letter-spacing:0.000px;">UTF-8</div></div><div class="r" style="left:2566px;top:1652px;width:292px;height:41px;background:#FFFFFF;"></div><div class="r" style="left:2566px;top:1652px;width:292px;height:2px;background:#C9D7EC;"></div><svg class="r" style="left:2510px;top:1640px;" width="70" height="53" viewBox="0 0 70 53"><g transform="rotate(-14 35 35)"><rect x="6" y="6" width="58" height="58" rx="9" fill="#F25E22"/><path d="M50 19C42 15 22 15 18 24C14 33 46 32 47 41C48 50 26 50 16 46" fill="none" stroke="#fff" stroke-width="8" stroke-linecap="round"/></g></svg><svg class="r" style="left:2588px;top:1665px;" width="30" height="28" viewBox="0 0 30 28"><rect x="2" y="5" width="26" height="12" rx="2" fill="none" stroke="#0A64D8" stroke-width="4"/><path d="M15 0V28" stroke="#0A64D8" stroke-width="4"/></svg><svg class="r" style="left:2640px;top:1664px;" width="22" height="29" viewBox="0 0 22 29"><circle cx="6" cy="6" r="5" fill="#0A64D8"/><path d="M12 19C16 19 18 23 14 28L9 29C12 25 12 22 12 19Z" fill="#0A64D8"/></svg><svg class="r" style="left:2687px;top:1662px;" width="27" height="31" viewBox="0 0 27 31"><rect x="8" y="0" width="11" height="19" rx="5.5" fill="#0A64D8"/><path d="M2 14C2 21 7 25 13.5 25S25 21 25 14" fill="none" stroke="#0A64D8" stroke-width="4"/><rect x="11" y="25" width="5" height="6" fill="#0A64D8"/></svg><svg class="r" style="left:2732px;top:1665px;" width="33" height="28" viewBox="0 0 33 28"><rect x="2" y="3" width="29" height="22" rx="3" fill="none" stroke="#0A64D8" stroke-width="3.5"/><path d="M5 10H28M5 17H28M12 10V24M21 10V24" stroke="#0A64D8" stroke-width="2.6"/></svg><svg class="r" style="left:2780px;top:1664px;" width="30" height="29" viewBox="0 0 30 29"><path d="M3 2L10 0H20L27 2L30 9L24 11V29H6V11L0 9Z" fill="#0A64D8"/></svg><svg class="r" style="left:2830px;top:1665px;" width="28" height="28" viewBox="0 0 28 28"><defs><linearGradient id="ig" x1="0" y1="0" x2="1" y2="1"><stop offset="0" stop-color="#8A5CF6"/><stop offset="1" stop-color="#D9607A"/></linearGradient></defs><rect x="0" y="0" width="28" height="28" fill="#F3E9F8"/><rect x="3" y="2" width="11" height="11" rx="4" fill="#6A6CF0"/><rect x="16" y="2" width="11" height="11" rx="4" fill="#4B6BF5"/><rect x="19" y="5" width="5" height="5" fill="#fff"/><rect x="3" y="15" width="11" height="12" rx="4" fill="url(#ig)"/><rect x="16" y="15" width="11" height="12" rx="4" fill="#5F6CF0"/></svg><div class="t" style="left:2632.00px;top:1664.31px;font-size:19px;color:#7A7A7A;letter-spacing:-0.600px;text-shadow:0 0 1px #fff,0 0 1px #fff;">CSDN @</div><svg class="r" style="left:2708px;top:1665px;" width="158" height="20" viewBox="0 0 158 20"><g fill="none" stroke="#fff" stroke-width="3.2" opacity="0.7"><path transform="translate(0.0,0)" d="M3 1H17V9H3Z M7 12L2 18 M12 12L18 18"/><path transform="translate(22.4,0)" d="M1 1H19V18H1Z M4 7H16 M10 3V10 M10 10L5 15 M10 10L15 15"/><path transform="translate(44.8,0)" d="M5 1L7 4 M2 7H17C17 12 16 17 12 18 M10 3C9 10 6 15 2 18 M11 10L13 12"/><path transform="translate(67.2,0)" d="M5 1L1 9 M3 6V18 M9 1L7 6H18L16 9 M12 6V18L10 17 M9 11L7 15 M15 11L18 15"/><path transform="translate(89.6,0)" d="M1 2H19 M10 2L9 6 M2 6H18V18 M2 6V18 M7 6V15 M13 6V15"/><path transform="translate(112.0,0)" d="M2 2L4 4 M1 8L3 10 M1 17L4 12 M7 1H17V7H7Z M7 4H17 M6 11H18V17H6Z M10 11V17 M14 11V17 M5 17H19"/><path transform="translate(134.4,0)" d="M3 1H15L11 5 M9 5V10 M3 5H17 M13 6L16 9 M2 12H18 M10 9V18 M10 12L3 17 M10 12L17 17"/></g><g fill="none" stroke="#7A7A7A" stroke-width="1.5"><path transform="translate(0.0,0)" d="M3 1H17V9H3Z M7 12L2 18 M12 12L18 18"/><path transform="translate(22.4,0)" d="M1 1H19V18H1Z M4 7H16 M10 3V10 M10 10L5 15 M10 10L15 15"/><path transform="translate(44.8,0)" d="M5 1L7 4 M2 7H17C17 12 16 17 12 18 M10 3C9 10 6 15 2 18 M11 10L13 12"/><path transform="translate(67.2,0)" d="M5 1L1 9 M3 6V18 M9 1L7 6H18L16 9 M12 6V18L10 17 M9 11L7 15 M15 11L18 15"/><path transform="translate(89.6,0)" d="M1 2H19 M10 2L9 6 M2 6H18V18 M2 6V18 M7 6V15 M13 6V15"/><path transform="translate(112.0,0)" d="M2 2L4 4 M1 8L3 10 M1 17L4 12 M7 1H17V7H7Z M7 4H17 M6 11H18V17H6Z M10 11V17 M14 11V17 M5 17H19"/><path transform="translate(134.4,0)" d="M3 1H15L11 5 M9 5V10 M3 5H17 M13 6L16 9 M2 12H18 M10 9V18 M10 12L3 17 M10 12L17 17"/></g></svg></body></html>
